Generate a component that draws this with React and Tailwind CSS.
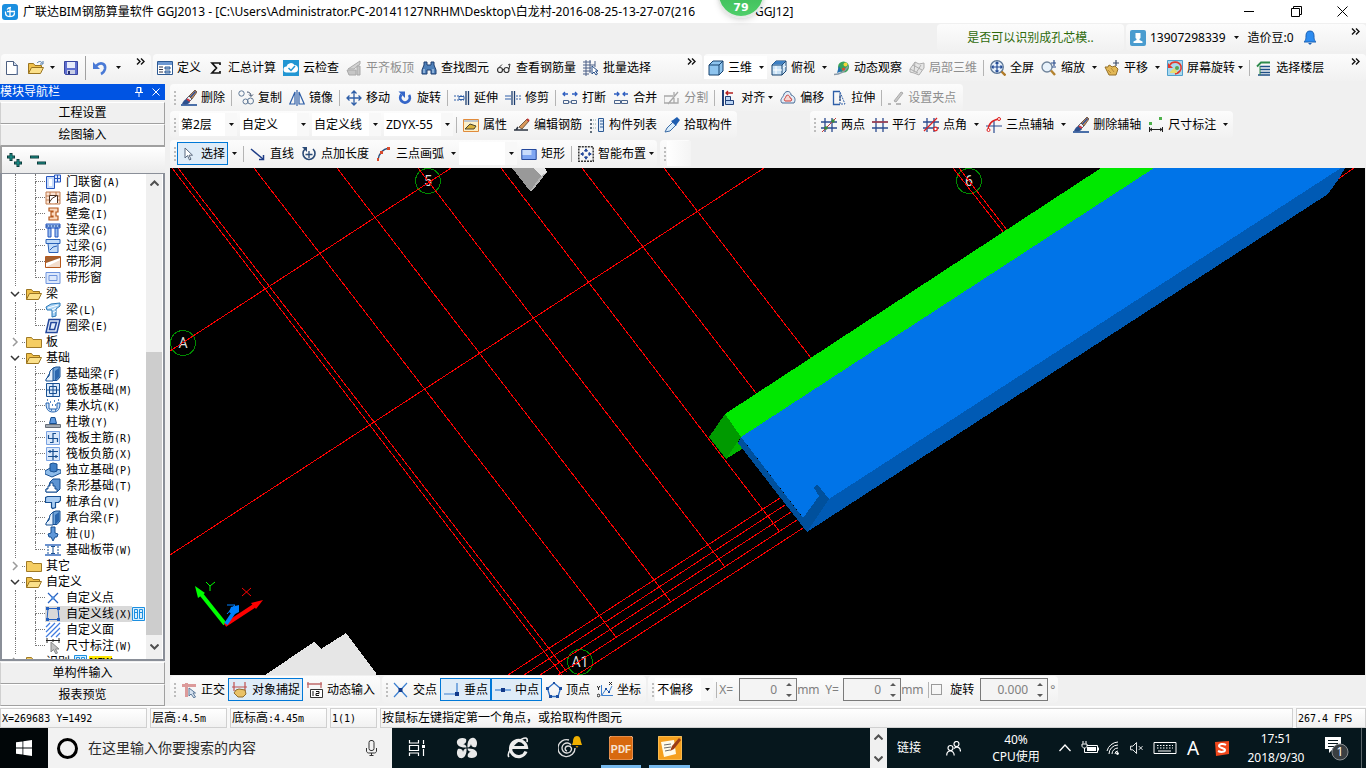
import React from 'react';

const Svg = ({ children }) => (
    <svg className="size-4 shrink-0" viewBox="0 0 16 16" fill="none" aria-hidden="true">
        {children}
    </svg>
);

const brush = (
    <>
        <path d="M0 15h16" stroke="#4a6fa8" strokeWidth="2" />
        <path d="M1 14c1-3 3-5 5-5l3 3c-1 2-4 3-8 2z" fill="#2d4f8e" />
        <path d="M5 9l3-3 3 3-3 3z" fill="#e9edf5" stroke="#345" strokeWidth=".8" />
        <path d="M6 9l3 2" stroke="#d03040" strokeWidth="1.6" />
        <path d="M8 6l6-6 2 2-5 7z" fill="#c98f5e" stroke="#5c4331" strokeWidth=".8" />
        <path d="M9.500 7l5-5.500" stroke="#27509b" strokeWidth="1.400" />
    </>
);

const folderOpen = (
    <>
        <path d="M.5 13.500V3.500h5l1.500 2h6.500v3" fill="#f0c04a" stroke="#9a7420" />
        <path d="M.5 13.500l3-6h12l-3 6z" fill="#fbe08a" stroke="#9a7420" />
    </>
);

const axisHash = <path d="M4 1v14M11 1v14M0 5h16M0 11h16" stroke="#2b4b8f" strokeWidth="1.300" />;

const cubeTop = (fill) => (
    <>
        <path d="M1 5l4-4h10v10l-4 4H1z" fill={fill} stroke="#17426f" />
        <path d="M1 5h10v10M11 5l4-4" stroke="#17426f" />
    </>
);

const footing = (
    <>
        <path d="M1 14.500L3 10l5-8 3-1h4v10l-3 3.500z" fill="#6fa3d8" stroke="#174f91" />
        <path d="M1 15v-2l3-3 1-5 3-3v13z" fill="#e6f1fc" stroke="#174f91" />
        <path d="M10 14V5l4-3v9l-3 3z" fill="#2a66ad" />
    </>
);

const icons = {
    newFile: (
        <>
            <path d="M2.500 1.500h7l4 4v9h-11z" fill="#fff" stroke="#4c5f80" />
            <path d="M9.500 1.500v4h4" fill="#cfdcef" stroke="#4c5f80" />
            <path d="M12 14h1V6" stroke="#8aa0c4" />
        </>
    ),
    open: (
        <>
            {folderOpen}
            <path d="M9 3c2-2 4-2 5 0m1-2v3h-3" stroke="#4a77a8" />
        </>
    ),
    save: (
        <>
            <path d="M1.500 1.500h13v13h-12l-1-1z" fill="#5f6fd0" stroke="#3a469f" />
            <path d="M4 2h8v6H4z" fill="#e8ecfb" />
            <path d="M4 10h8v4H4z" fill="#c9cfe6" />
            <path d="M5 11h2v3H5z" fill="#27306e" />
        </>
    ),
    undo: (
        <>
            <path d="M4 6c5-5 10-2 9 3-.5 2-2 4-4 5" stroke="#4a7ad6" strokeWidth="2.600" />
            <path d="M1 2v7h7z" fill="#4a7ad6" />
        </>
    ),
    define: (
        <>
            <path d="M.5 1.500h15v13H.5z" fill="#fff" stroke="#2d5a94" />
            <path d="M1 2h14v3H1z" fill="#6d98d2" />
            <path d="M2 7h4M2 9.500h4M2 12h4" stroke="#334" />
            <path d="M8 7h5v2H8zM8 11h5v2H8z" fill="#a9c4e6" stroke="#2d5a94" />
        </>
    ),
    sigma: <path d="M12 5V3H4l4.500 5L4 13h8v-2" stroke="#111" strokeWidth="1.700" />,
    cloud: (
        <>
            <path d="M0 0h16v16H0z" fill="#2196d3" />
            <path d="M3.500 12.500a3 3 0 010-6 4.500 4.500 0 018-1.500 3.800 3.800 0 01.5 7.500z" fill="#fff" />
            <path d="M5.500 8l2.500 2.500 4-4.500" stroke="#2196d3" strokeWidth="1.500" />
        </>
    ),
    alignSlab: (
        <>
            <path d="M2 9l6-4 6-4v3L8 9z" fill="#d2d2d2" stroke="#aaa" />
            <path d="M1 10h9v5H3zM11 6h3v9h-3z" fill="#c6c6c6" stroke="#a8a8a8" />
        </>
    ),
    binoculars: (
        <>
            <path d="M3 2h3v3h4V2h3v3l2 5v4h-5v-4H6v4H1v-4l2-5z" fill="#4d7fb8" stroke="#1e3f70" />
            <path d="M3 9v4M12 9v4" stroke="#cfe2f7" />
        </>
    ),
    glasses: (
        <>
            <circle cx="4" cy="10" r="2.500" stroke="#333" strokeWidth="1.200" />
            <circle cx="10.500" cy="10" r="2.500" stroke="#333" strokeWidth="1.200" />
            <path d="M6.500 9.500h1.500M3 7.500l3-3M13 9l1-5-2 1" stroke="#333" />
        </>
    ),
    batch: (
        <>
            <path d="M0 2h8M0 5h12M0 8h8M0 11h8M0 14h6M3 0v16M7 0v13M12 1v6" stroke="#4a5f86" />
            <path d="M9 6v8l2-2 2 3 1.500-1-2-3h2.500z" fill="#fff" stroke="#234b86" />
        </>
    ),
    cube: cubeTop('#8ec4ee'),
    cubeTopView: (
        <>
            {cubeTop('#c9e2f6')}
            <path d="M1.500 4.500L5 1h9.500L11 4.500z" fill="#3d7fc2" />
            <path d="M5 6v8M2 10h9M12 8l3-2" stroke="#fff" />
        </>
    ),
    orbit: (
        <>
            <ellipse cx="9.500" cy="7" rx="5.500" ry="5.500" fill="#3aa45a" />
            <circle cx="11.500" cy="4.500" r="2" fill="#f0d83a" />
            <path d="M0 14.500c4 0 10-2 14-8" stroke="#8a9aa8" strokeWidth="1.500" />
            <path d="M3 13l2-7 3 5z" fill="#1f6fb0" />
            <circle cx="9.500" cy="9" r="1.500" fill="#e14a2c" />
        </>
    ),
    partial3d: (
        <path
            d="M1 9l5-7 4 2 5-1v5l-5 7-5-2-4-1zM4 5l9 5M7 13l5-8M1 9l8 4M6 2l-1 10"
            fill="#e5e5e5"
            stroke="#adadad"
        />
    ),
    fullscreen: (
        <>
            <circle cx="7" cy="7" r="6.300" fill="#e6f0fb" stroke="#5b7595" strokeWidth="1.300" />
            <path d="M7 2v10M2 7h10M5.500 3.500L7 2l1.500 1.500M5.500 10.500L7 12l1.500-1.500M3.500 5.500L2 7l1.500 1.500M10.500 5.500L12 7l-1.500 1.500" stroke="#234b96" strokeWidth="1.200" />
            <path d="M11.500 11.500l4 4" stroke="#b07a28" strokeWidth="2.400" />
        </>
    ),
    zoom: (
        <>
            <circle cx="6" cy="7" r="5" fill="#e8f2fb" stroke="#70849b" strokeWidth="1.300" />
            <path d="M10 10.500l4 4.500" stroke="#b3822e" strokeWidth="2.400" />
            <path d="M13 0v6M10 3h5M11 7h4" stroke="#2d4f8e" strokeWidth="1.200" />
        </>
    ),
    pan: (
        <>
            <path d="M1 7h3l1-2 2 1 1 1 3-1 3 3-2 6H5z" fill="#e3b856" stroke="#94702a" />
            <path d="M4 10l3 3M7 8l3 4" stroke="#b98c36" />
            <path d="M12 0v6M9 3h6" stroke="#3a4a66" strokeWidth="1.200" />
        </>
    ),
    screenRotate: (
        <>
            <path d="M.5.5h15v15H.5z" fill="#aad9ee" stroke="#4fa0cd" />
            <path d="M3 5c2-4 9-4 11 1 1 4-2 7-6 8" stroke="#e03a2e" strokeWidth="1.600" />
            <path d="M1 3v5h5z" fill="#e03a2e" />
            <path d="M3 12l4-4 3 3v2H3z" fill="#e7dd71" />
            <circle cx="10" cy="8" r="2" fill="#58a452" />
        </>
    ),
    floors: (
        <>
            <path d="M1 6.500L5 2.500h9" stroke="#2d8a4b" strokeWidth="1.800" />
            <path d="M4 6.500h10M4 9.500h10M4 12.500h10M2 15h12" stroke="#1e4f86" strokeWidth="1.500" />
            <path d="M4 6v9" stroke="#2d8a4b" />
        </>
    ),
    brush,
    copy: (
        <>
            <circle cx="3.500" cy="3.500" r="2.700" stroke="#5f7896" />
            <circle cx="7.500" cy="11.500" r="2.500" stroke="#5f7896" />
            <circle cx="12.500" cy="11" r="3" stroke="#5f7896" />
            <path d="M9 2c2 0 4 1 4 4M11 4.500l2 2 2-2" stroke="#3a4b66" />
        </>
    ),
    mirror: <path d="M6 2v12H.8zM10 2v12h5.200zM8 0v16" stroke="#2f5fa8" strokeWidth="1.200" />,
    move: (
        <path d="M8 1v14M1 8h14M5.500 3.500L8 1l2.500 2.500M5.500 12.500L8 15l2.500-2.500M3.500 5.500L1 8l2.500 2.500M12.500 5.500L15 8l-2.500 2.500" stroke="#2f5fa8" strokeWidth="1.300" />
    ),
    rotate: (
        <>
            <path d="M4.500 4.500a4.800 4.800 0 107.500.5" stroke="#3566c8" strokeWidth="2.800" />
            <path d="M1.500 1.500H8V8z" fill="#3566c8" />
        </>
    ),
    extend: (
        <>
            <path d="M0 6h10M0 10h10" stroke="#2f5fa8" strokeDasharray="2 1" />
            <path d="M5 6.500h5v3H5z" stroke="#2f5fa8" />
            <path d="M12 1v14M14.500 1v14" stroke="#1e3f70" strokeWidth="1.300" />
        </>
    ),
    trim: (
        <>
            <path d="M7 1v14M9.500 1v14" stroke="#1e3f70" strokeWidth="1.300" />
            <path d="M0 6h6M0 9h6" stroke="#2f5fa8" />
            <path d="M11 6h5M11 9h5" stroke="#2f5fa8" strokeDasharray="2 1" />
        </>
    ),
    breakIt: (
        <>
            <path d="M1 4h5M10 4h5M3 2L1 4l2 2M13 2l2 2-2 2" stroke="#2f5fc0" strokeWidth="1.300" />
            <path d="M1.500 10.500h5v3h-5zM9.500 10.500h5v3h-5zM6 12h4" stroke="#4a648c" />
        </>
    ),
    join: (
        <>
            <path d="M1 4h5M10 4h5M4 2l2 2-2 2M12 2l-2 2 2 2" stroke="#2f5fc0" strokeWidth="1.300" />
            <path d="M1.500 10.500h6v3h-6zM8.500 10.500h6v3h-6z" stroke="#4a648c" />
        </>
    ),
    split: <path d="M0 6h9M0 13h14V8M0 6v7M4 14l10-12M10 2v11" stroke="#a9a9a9" strokeWidth="1.300" />,
    align: (
        <>
            <path d="M2 0v16" stroke="#1f3f78" strokeWidth="2" />
            <path d="M4.500 10.500h8v4h-8zM4.500 6.500h5v4h-5z" fill="#b9d3f3" stroke="#1f3f78" />
            <path d="M12 3H5M7 1L5 3l2 2" stroke="#b32020" strokeWidth="1.300" />
        </>
    ),
    offset: (
        <>
            <path d="M2 13c-3-4 1-5 2-9 2-4 7-3 7 1 4 1 5 5 3 8z" fill="#e3ecf7" stroke="#4a6c96" />
            <path d="M5 11c-2-2 1-3 1-5 2-2 4 0 4 2 2 0 2 2 1 3z" fill="#f6d6d2" stroke="#cf3b34" />
        </>
    ),
    stretch: (
        <>
            <path d="M9 1.500H2.500v13H9" stroke="#2f5fa8" strokeWidth="1.300" />
            <path d="M9 2l5 12H9z" stroke="#2f5fa8" strokeDasharray="2 1" />
            <path d="M9 5v6" stroke="#1e3f70" />
        </>
    ),
    gripPoint: (
        <>
            <path d="M6 11L13 2l2 1-7 9z" fill="#c9c9c9" stroke="#aaa" />
            <path d="M0 14h3M8 14h5" stroke="#a5a5a5" strokeWidth="1.500" />
        </>
    ),
    property: (
        <>
            <path d="M.5 2.500h15v12H.5z" fill="#fdf0c8" stroke="#e08b3c" />
            <path d="M1 3h14v2H1z" fill="#bfc6cf" />
            <path d="M2 12l5-5 6 2-2 3H6z" fill="#d9b13a" stroke="#4a4330" />
        </>
    ),
    editBar: (
        <>
            <path d="M0 13h14M2 13l2-3" stroke="#2b3340" strokeWidth="1.500" />
            <path d="M5 10L13 2l2 2-7 8z" fill="#d9985a" stroke="#58402b" strokeWidth=".8" />
            <path d="M13 2l2 2" stroke="#c03434" strokeWidth="2" />
        </>
    ),
    memberList: (
        <>
            <path d="M1 3h2M1 7h2M1 11h2M1 15h2" stroke="#345" strokeWidth="1.500" />
            <path d="M4 3h4M4 7h4M4 11h4" stroke="#8aa" strokeDasharray="1 1" />
            <path d="M9.500 1.500h5v13h-5z" fill="#e2edf9" stroke="#2d5a94" />
            <path d="M11 4h3M11 7h3M11 10h3" stroke="#2d5a94" />
        </>
    ),
    picker: (
        <>
            <path d="M1 15l2-4 6-6 3 3-6 6z" fill="#d9ecfb" stroke="#3a6ba5" />
            <path d="M7 4l2-1 4-3 3 3-3 4-1 2z" fill="#1e5db0" />
        </>
    ),
    twoPoint: (
        <>
            {axisHash}
            <path d="M1 15L15 1" stroke="#c23b3b" />
            <circle cx="5" cy="11" r="1.700" fill="#3a8a35" />
            <circle cx="12" cy="4" r="1.700" fill="#3a8a35" />
        </>
    ),
    parallel: (
        <>
            {axisHash}
            <path d="M0 5h16" stroke="#c23b3b" strokeWidth="1.300" />
        </>
    ),
    pointAngle: (
        <>
            {axisHash}
            <path d="M1 14L14 1" stroke="#d22" strokeWidth="1.300" />
            <circle cx="12.500" cy="12" r="1.800" fill="#fff" stroke="#d22" strokeWidth="1.300" />
        </>
    ),
    threeAxis: (
        <>
            <path d="M8 3v13M0 9h16" stroke="#2b4b8f" strokeWidth="1.200" />
            <path d="M2 14C2 7 6 3 13 2" stroke="#d22" strokeWidth="1.300" />
            <circle cx="13" cy="2" r="1.500" fill="#fff" stroke="#d22" />
            <circle cx="2.500" cy="13" r="1.500" fill="#fff" stroke="#d22" />
        </>
    ),
    dimension: (
        <>
            <path d="M1 5h3v3H1zM11 0h3v3h-3z" fill="#4db04a" />
            <path d="M1.500 10v5M14.500 10v5M2 12.500h12M4 11l-2 1.500L4 14M12 11l2 1.500-2 1.500" stroke="#222" />
        </>
    ),
    cursor: <path d="M4 2v10l2.500-2.500L8.500 14l1.500-.8-2-4h3.500z" fill="#fff" stroke="#5a6a80" />,
    line: (
        <>
            <path d="M1 3l12 10" stroke="#1d3c86" strokeWidth="1.500" />
            <path d="M13.500 9v4.500H9" stroke="#1d3c86" strokeWidth="1.500" />
        </>
    ),
    pointLength: (
        <>
            <path d="M4 3a6 6 0 108 0" stroke="#2b4b77" strokeWidth="1.600" />
            <path d="M8 5v7M4.500 8.500h7" stroke="#2b4b77" strokeWidth="1.300" />
            <path d="M1 1h5v5z" fill="#2b4b77" />
        </>
    ),
    arc: (
        <>
            <path d="M2 14C3 7 7 3 13 2" stroke="#2b4b77" strokeWidth="1.400" />
            <path d="M1 12h2v3H1zM4 5h3v3H4zM11 1h3v3h-3z" fill="#d84a2c" />
        </>
    ),
    rect: (
        <>
            <path d="M.8 3.500h14.400v10H.8z" fill="#7fa6f2" stroke="#24489c" />
            <path d="M1.500 4h9v5h-9z" fill="#c9dcfb" />
        </>
    ),
    smart: (
        <>
            <path d="M.8.8h14.400v14.400H.8z" stroke="#333" strokeWidth="1.500" strokeDasharray="2 1" />
            <path d="M8 2.500v3.500M8 10v3.500M2.500 8H6M10 8h3.500M8 3L6.500 5h3zM8 13l-1.500-2h3zM3 8l2-1.500v3zM13 8l-2-1.500v3z" stroke="#24489c" fill="#24489c" />
        </>
    ),
    ortho: (
        <>
            <path d="M1 3.500h14M5.500 1v14" stroke="#dc9a9a" strokeWidth="3" />
            <path d="M8 6v8l2-2 3 4 1.500-1-2.500-4h2.500z" fill="#d7e2ef" stroke="#5b7899" />
        </>
    ),
    snap: (
        <>
            <path d="M2 0v9M13 0v9M0 5h15" stroke="#c05050" strokeWidth="1.200" />
            <path d="M4 8l3-1 6 1 1 4-3 3H6l-4-4z" fill="#e9c268" stroke="#8f6c2d" />
        </>
    ),
    dynInput: (
        <>
            <path d="M0 2h15M1 0v6M14 0v6" stroke="#c06b6b" strokeWidth="1.300" />
            <path d="M3.500 7.500h12v8h-12z" fill="#fff" stroke="#333" />
            <path d="M6 9v5M9 9.500h3v2H9v2h3" stroke="#111" />
        </>
    ),
    cross: (
        <>
            <path d="M1 1l13 14M14 1L1 15" stroke="#3b7fd0" strokeWidth="1.200" />
            <path d="M5.500 6h4v4h-4z" fill="#123a8a" />
        </>
    ),
    perp: (
        <>
            <path d="M13 1v12M0 12h15" stroke="#3b7fd0" strokeWidth="1.200" />
            <path d="M11 10h4v4h-4z" fill="#123a8a" />
        </>
    ),
    mid: (
        <>
            <path d="M0 8h16" stroke="#3b7fd0" strokeWidth="1.200" />
            <path d="M6 6h4v4H6z" fill="#123a8a" />
        </>
    ),
    vertex: (
        <>
            <path d="M8 1l6.500 5.500L12 14.500H4L1.500 6.500z" stroke="#2f6fc4" strokeWidth="1.300" />
            <path d="M7 0h2v2H7zM0 5h3v3H0zM13 5h3v3h-3zM3 13h3v3H3zM10 13h3v3h-3z" fill="#1d4fa0" />
        </>
    ),
    coord: (
        <>
            <path d="M4.500 3v10.500H16M5 13l4-6 3 3 3-6" stroke="#3b7fd0" />
            <path d="M0 4l1.500 2L3 4M1.500 6v2M12 0l3 3M15 0l-3 3" stroke="#222" />
            <circle cx="1.500" cy="13.500" r="1.300" stroke="#222" />
            <path d="M8 6h2v2H8zM11 9h2v2h-2z" fill="#1d4fa0" />
        </>
    ),
    // tree icons
    folder: <path d="M.5 13.500v-10h5l1.500 2h8.500v8z" fill="#f5cd62" stroke="#a07a26" />,
    folderOpen,
    doorWindow: (
        <>
            <path d="M1.500 2.500h8v12h-8z" fill="#c9dcfb" stroke="#2656c0" />
            <path d="M9.500 1h6v7h-6zM12.500 1v7M10 4.500h5" fill="#dfeafc" stroke="#2656c0" />
            <path d="M4 5h3v7H4z" fill="#fff" />
        </>
    ),
    wallHole: (
        <>
            <path d="M1 2h14v12H1zM1 6h14M1 10h14M5 2v12M11 2v12" fill="#fbe3d3" stroke="#c27c4e" />
            <path d="M4.500 13V5.500h8V13" fill="#fff" stroke="#4a3223" />
            <path d="M4.500 12l3-4 4-2" stroke="#4a3223" />
        </>
    ),
    niche: <path d="M4 2h9v4h-2v4h2v4H4v-3h4v-1H6V6h2V5H4z" fill="#fbd9bf" stroke="#b4571c" strokeWidth="1.200" />,
    linkBeam: (
        <>
            <path d="M1 2h14v4H1zM3 6h3v9H3zM10 6h3v9h-3z" fill="#9cc0f0" stroke="#2656c0" />
            <path d="M1 4h14" stroke="#1a3f8a" strokeDasharray="2 1" />
        </>
    ),
    lintel: <path d="M1 1.500h14v4H1zM3 5.500h10v9H4zM5 12l3-3 4-1" fill="#c3dcf8" stroke="#2a62b8" />,
    stripHole: (
        <>
            <path d="M.5 2.500h15v11H.5z" fill="#fff" stroke="#b4571c" />
            <path d="M1 9l14-5V3H1z" fill="#a4602f" />
            <path d="M1 13l14-7v7z" fill="#f3dccb" />
        </>
    ),
    stripWindow: <path d="M1 2.500h14v11H1zM4 5.500h8v5H4z" fill="#dce8fc" stroke="#6d93dc" />,
    beam: (
        <>
            <path d="M1 5l5-3 9-1v3l-4 3v7l-4 1V8L2 8z" fill="#a9d3f4" stroke="#2a78b8" />
            <path d="M7 8l4-2M3 6l10-3M8 11l3-2" stroke="#fff" />
        </>
    ),
    ringBeam: <path d="M4 1.500h11L12 14.500H1zM6 4.500h5.500L9.500 11.500H4.500z" fill="#e1ebfa" stroke="#24489c" strokeWidth="1.500" />,
    footing,
    raft: (
        <path d="M1.500 1.500h13v13h-13zM4.500 4.500h7v7h-7zM1 8h14M8 1v14" fill="#dcebfb" stroke="#174f91" />
    ),
    pit: (
        <>
            <path d="M1 5h3v6h8V5h3c0 6-2 9-7 9s-7-3-7-9z" fill="#d5e8fb" stroke="#2060b0" />
            <path d="M5 4h1M9 3h1M7 7h1M10 7h1M2 2h1M13 2h1M6 12h1M10 12h1" stroke="#2060b0" strokeWidth="1.300" />
        </>
    ),
    pedestal: (
        <>
            <path d="M4.500 9.500l1.500-6h4l1.500 6z" fill="#5f9ae0" stroke="#174f91" />
            <path d="M.5 10.500h15v3H.5z" fill="#a5abb3" stroke="#666d77" />
        </>
    ),
    raftMain: (
        <>
            <path d="M1.500 1.500h13v13h-13z" fill="#dbe9fb" stroke="#7aa3e2" />
            <path d="M8 3.500h3M8 3v10M3.500 5v3.500h9V12M8 12.500H5" stroke="#174f91" strokeWidth="1.200" />
        </>
    ),
    raftNeg: (
        <>
            <path d="M1.500 1.500h13v13h-13z" fill="#dbe9fb" stroke="#7aa3e2" />
            <path d="M3 5.500h10M3 10.500h10M8 3v11M5 4v3M11 9v3" stroke="#174f91" strokeWidth="1.200" />
        </>
    ),
    isolated: (
        <>
            <path d="M0 9l5-3 11 2v3l-9 4-7-3z" fill="#8dbbe9" stroke="#174f91" />
            <path d="M5 2l3-1 4 1v7l-3 1-4-1z" fill="#3f7fc7" stroke="#174f91" />
        </>
    ),
    strip: (
        <>
            <path d="M1 14v-3h2l2-7 3-3h7v10l-3 3z" fill="#5d94d2" stroke="#174f91" />
            <path d="M1 14v-3h2V8h2V5h3v3h2v3h2v3z" fill="#fff" stroke="#174f91" />
        </>
    ),
    pileCap: <path d="M.5 3.500l2-1h13v4l-2 2h-3v5l-3 1-1-1V8.500h-6z" fill="#a9cdf3" stroke="#174f91" strokeWidth="1.200" />,
    pile: <path d="M6 1h4v6l3 1-1 3h-2l-2 4-2-4H4L3 8l3-1z" fill="#5f97d8" stroke="#174f91" />,
    slabStrip: (
        <>
            <path d="M0 3h16M0 13h16" stroke="#3b6fc0" strokeWidth="1.500" />
            <path d="M3 4v8M13 4v8" stroke="#174f91" strokeDasharray="2 1" />
            <path d="M8 4v8M6 4.500h4M6 11.500h4" stroke="#174f91" />
        </>
    ),
    customPoint: (
        <>
            <path d="M3 3l10 10M13 3L3 13" stroke="#2460c0" strokeWidth="1.200" />
            <path d="M6.500 6.500h3v3h-3z" fill="#4b8be0" />
        </>
    ),
    customLine: (
        <>
            <path d="M3 2.500h10l1 11H2z" stroke="#2460c0" />
            <path d="M1 1h3v3H1zM12 1h3v3h-3zM1 12h3v3H1zM12 12h3v3h-3z" fill="#2460c0" />
        </>
    ),
    customFace: (
        <path d="M1 5l4-4M1 10l9-9M1 15L15 1M6 15l9-9M11 15l4-4" stroke="#3f7be0" strokeWidth="1.200" />
    ),
    dimTree: (
        <>
            <path d="M1 2.500h14M2 0v5M8 1v3M14 0v5" stroke="#222" />
            <path d="M6 4v10l2.500-2.500L11 16l1.500-1-2-4H14z" fill="#c3c3c3" stroke="#888" />
        </>
    ),
};

const Icon = ({ name }) => <Svg>{icons[name]}</Svg>;

const Caret = () => (
    <svg className="h-[3px] w-[5px] shrink-0" viewBox="0 0 5 3" aria-hidden="true">
        <path d="M0 0h5L2.500 3z" fill="#111" />
    </svg>
);

const Grip = () => (
    <span className="flex w-[7px] shrink-0 flex-col gap-[2px] pl-1">
        <i className="h-[2px] w-[2px] bg-[#bdbdbd]" />
        <i className="h-[2px] w-[2px] bg-[#bdbdbd]" />
        <i className="h-[2px] w-[2px] bg-[#bdbdbd]" />
        <i className="h-[2px] w-[2px] bg-[#bdbdbd]" />
    </span>
);

const Sep = () => (
    <span className="flex w-[6px] shrink-0 justify-center">
        <i className="h-4 w-px bg-[#b4b4b4]" />
    </span>
);

const Group = ({ children, className = '' }) => (
    <div
        className={`flex h-[27px] shrink-0 items-center rounded-sm bg-gradient-to-b from-[#fcfcfc] to-[#f1f1f1] ${className}`}
    >
        {children}
    </div>
);

const Tool = ({ icon, label, arrow, active, disabled }) => (
    <>
        <button
            disabled={disabled}
            className={`flex h-[23px] shrink-0 items-center gap-1 whitespace-nowrap pl-1 pr-[3px] ${
                active ? 'bg-[#dfecf8] ring-1 ring-inset ring-[#0078d7]' : ''
            } ${disabled ? 'text-[#8e8e8e]' : 'text-black'}`}
        >
            <Icon name={icon} />
            {label}
        </button>
        {arrow === 'split' && (
            <span className="flex w-3 shrink-0 justify-center">
                <Caret />
            </span>
        )}
        {arrow === 'menu' && (
            <span className="flex w-2 shrink-0">
                <Caret />
            </span>
        )}
    </>
);

const Combo = ({ label, value, className }) => (
    <span className={`flex h-[23px] shrink-0 items-center bg-white ${className}`}>
        <select
            aria-label={label}
            defaultValue={value}
            className="h-full min-w-0 flex-1 appearance-none bg-white pl-[2px] outline-none"
        >
            <option>{value}</option>
        </select>
        <span className="flex h-full w-3 items-center justify-center bg-[#f8f8f8]">
            <Caret />
        </span>
    </span>
);

const More = () => (
    <button aria-label="更多" className="mr-1 ml-auto flex h-full w-[11px] shrink-0 items-start pt-1">
        <svg className="h-[7px] w-[9px]" viewBox="0 0 9 7" fill="none">
            <path d="M1 .5l3 3-3 3M5 .5l3 3-3 3" stroke="#111" strokeWidth="1.400" />
        </svg>
    </button>
);

// Latin runs are set in a 6px wide monospace next to the 12px Chinese glyphs
const Song = ({ text }) =>
    text.split(/([\x20-\x7e]+)/).map((part, i) =>
        /^[\x20-\x7e]+$/.test(part) ? (
            <span key={i} className="whitespace-pre font-['DejaVu_Sans_Mono','Noto_Sans_CJK_SC',monospace] text-[10px]">
                {part}
            </span>
        ) : (
            part
        )
    );

const TitleBar = () => (
    <header className="relative flex h-[23px] shrink-0 items-center bg-white pl-[2px]">
        <svg className="size-4 shrink-0" viewBox="0 0 16 16" fill="none">
            <rect width="16" height="16" rx="3" fill="#1b8fe0" />
            <path d="M8 3v10M3.500 7.500v1c0 3 2 4 4 4M12.500 8.500c0 3-2 4-4 4M5 7.500h8M5 5.500C6 4 7 3.500 9 3.500" stroke="#fff" strokeWidth="1.300" />
        </svg>
        <h1 className="ml-[5px] flex flex-1 whitespace-nowrap">
            <span className="w-[732px]">
                广联达BIM钢筋算量软件 GGJ2013 - [C:\Users\Administrator.PC-20141127NRHM\Desktop\白龙村-2016-08-25-13-27-07(216
            </span>
            <span>GGJ12]</span>
        </h1>
        <div className="absolute top-[-30px] left-[717px] flex size-12 items-end justify-center rounded-full border-2 border-[#e4e8e4] bg-gradient-to-b from-[#2fae4c] to-[#4fcf6a] pb-px font-['DejaVu_Sans',sans-serif] text-[11px] leading-[14px] font-bold text-white shadow-md">
            79
        </div>
        <div className="flex w-[140px] items-center">
            <button aria-label="最小化" className="flex flex-1 justify-center">
                <i className="h-px w-[10px] bg-black" />
            </button>
            <button aria-label="还原" className="flex flex-1 justify-center">
                <svg className="size-[11px]" viewBox="0 0 11 11" fill="none">
                    <path d="M.5 2.500h8v8h-8zM2.500 2.500v-2h8v8h-2" stroke="#000" />
                </svg>
            </button>
            <button aria-label="关闭" className="flex flex-1 justify-center">
                <svg className="size-[11px]" viewBox="0 0 11 11" fill="none">
                    <path d="M.5.5l10 10M10.500.5l-10 10" stroke="#000" />
                </svg>
            </button>
        </div>
    </header>
);

const AccountBar = () => (
    <div className="flex h-[30px] shrink-0 justify-end gap-[2px] pt-px">
        <Group className="w-[187px] justify-center text-[#2f6b0c]">
            <a href="#tip">是否可以识别成孔芯模..</a>
        </Group>
        <Group className="w-[240px] pl-1">
            <svg className="size-4 shrink-0" viewBox="0 0 16 16">
                <rect width="16" height="16" rx="2" fill="#4a9ccf" />
                <path d="M5.500 3h5v5l-1 1v1l3 1.500V13h-9v-1.500l3-1.500V9l-1-1z" fill="#fff" />
            </svg>
            <button className="flex items-center gap-2 pl-1">
                13907298339
                <Caret />
            </button>
            <span className="pl-[9px]">造价豆:0</span>
            <button aria-label="消息" className="pl-2">
                <svg className="size-4" viewBox="0 0 16 16">
                    <path d="M8 1c3 0 4 2 4 5 0 4 1 5 2 6H2c1-1 2-2 2-6 0-3 1-5 4-5z" fill="#2d8cf0" stroke="#1d62b5" />
                    <path d="M6 13h4l-2 2z" fill="#1d62b5" />
                </svg>
            </button>
            <More />
        </Group>
    </div>
);

const MainToolbar = () => (
    <div className="flex h-[31px] shrink-0 gap-[2px] pt-px pl-px">
        <Group className="w-[150px] pl-[3px]">
            <button aria-label="新建" className="w-6"><Icon name="newFile" /></button>
            <button aria-label="打开" className="w-[22px]"><Icon name="open" /></button>
            <Caret />
            <button aria-label="保存" className="ml-2 w-[18px]"><Icon name="save" /></button>
            <i className="ml-1 h-6 w-px bg-[#a0a0a0]" />
            <button aria-label="撤销" className="ml-[6px] w-6"><Icon name="undo" /></button>
            <Caret />
            <More />
        </Group>
        <Group className="w-[549px]">
            <Tool icon="define" label="定义" />
            <Tool icon="sigma" label="汇总计算" />
            <Tool icon="cloud" label="云检查" />
            <Tool icon="alignSlab" label="平齐板顶" disabled />
            <Tool icon="binoculars" label="查找图元" />
            <Tool icon="glasses" label="查看钢筋量" />
            <Tool icon="batch" label="批量选择" />
            <More />
        </Group>
        <Group className="min-w-0 flex-1">
            <span className="flex items-center bg-white">
                <Tool icon="cube" label="三维" arrow="split" />
            </span>
            <Tool icon="cubeTopView" label="俯视" arrow="split" />
            <Tool icon="orbit" label="动态观察" />
            <Tool icon="partial3d" label="局部三维" disabled />
            <Sep />
            <Tool icon="fullscreen" label="全屏" />
            <Tool icon="zoom" label="缩放" arrow="split" />
            <Tool icon="pan" label="平移" arrow="split" />
            <Tool icon="screenRotate" label="屏幕旋转" arrow="menu" />
            <Sep />
            <Tool icon="floors" label="选择楼层" />
            <More />
        </Group>
    </div>
);

const EditToolbars = () => (
    <>
        <div className="flex h-[27px] shrink-0">
            <Group className="pr-1">
                <Grip />
                <Tool icon="brush" label="删除" />
                <Sep />
                <Tool icon="copy" label="复制" />
                <Tool icon="mirror" label="镜像" />
                <Sep />
                <Tool icon="move" label="移动" />
                <Tool icon="rotate" label="旋转" />
                <Sep />
                <Tool icon="extend" label="延伸" />
                <Tool icon="trim" label="修剪" />
                <Sep />
                <Tool icon="breakIt" label="打断" />
                <Tool icon="join" label="合并" />
                <Tool icon="split" label="分割" disabled />
                <Sep />
                <Tool icon="align" label="对齐" arrow="menu" />
                <Tool icon="offset" label="偏移" />
                <Tool icon="stretch" label="拉伸" />
                <Sep />
                <Tool icon="gripPoint" label="设置夹点" disabled />
            </Group>
        </div>
        <div className="flex h-[29px] shrink-0 gap-[73px]">
            <Group className="pr-[2px]">
                <Grip />
                <div className="flex gap-[3px] pl-[2px]">
                    <Combo label="楼层" value="第2层" className="w-[58px]" />
                    <Combo label="构件类型" value="自定义" className="w-[69px]" />
                    <Combo label="构件" value="自定义线" className="w-[69px]" />
                    <Combo label="构件名称" value="ZDYX-55" className="w-[69px]" />
                </div>
                <Sep />
                <Tool icon="property" label="属性" />
                <Tool icon="editBar" label="编辑钢筋" />
                <Tool icon="memberList" label="构件列表" />
                <Tool icon="picker" label="拾取构件" />
            </Group>
            <Group className="pr-[2px]">
                <Grip />
                <Tool icon="twoPoint" label="两点" />
                <Tool icon="parallel" label="平行" />
                <Tool icon="pointAngle" label="点角" arrow="split" />
                <Tool icon="threeAxis" label="三点辅轴" arrow="split" />
                <Tool icon="brush" label="删除辅轴" />
                <Tool icon="dimension" label="尺寸标注" arrow="split" />
            </Group>
        </div>
        <div className="flex h-[28px] shrink-0 gap-[3px]">
            <Group>
                <Grip />
                <Tool icon="cursor" label="选择" arrow="split" active />
                <Sep />
                <Tool icon="line" label="直线" />
                <Tool icon="pointLength" label="点加长度" />
                <Tool icon="arc" label="三点画弧" arrow="split" />
                <Combo label="画弧方式" value="" className="w-[58px]" />
                <Tool icon="rect" label="矩形" />
                <Sep />
                <Tool icon="smart" label="智能布置" arrow="menu" />
            </Group>
            <Group>
                <Grip />
                <span className="h-[25px] w-6 bg-gradient-to-r from-white to-[#f4f4f4]" />
            </Group>
        </div>
    </>
);

const tree = [
    { icon: 'doorWindow', label: '门联窗(A)' },
    { icon: 'wallHole', label: '墙洞(D)' },
    { icon: 'niche', label: '壁龛(I)' },
    { icon: 'linkBeam', label: '连梁(G)' },
    { icon: 'lintel', label: '过梁(G)' },
    { icon: 'stripHole', label: '带形洞' },
    { icon: 'stripWindow', label: '带形窗', last: true },
    { folder: true, open: true, label: '梁' },
    { icon: 'beam', label: '梁(L)' },
    { icon: 'ringBeam', label: '圈梁(E)', last: true },
    { folder: true, label: '板' },
    { folder: true, open: true, label: '基础' },
    { icon: 'footing', label: '基础梁(F)' },
    { icon: 'raft', label: '筏板基础(M)' },
    { icon: 'pit', label: '集水坑(K)' },
    { icon: 'pedestal', label: '柱墩(Y)' },
    { icon: 'raftMain', label: '筏板主筋(R)' },
    { icon: 'raftNeg', label: '筏板负筋(X)' },
    { icon: 'isolated', label: '独立基础(P)' },
    { icon: 'strip', label: '条形基础(T)' },
    { icon: 'pileCap', label: '桩承台(V)' },
    { icon: 'footing', label: '承台梁(F)' },
    { icon: 'pile', label: '桩(U)' },
    { icon: 'slabStrip', label: '基础板带(W)', last: true },
    { folder: true, label: '其它' },
    { folder: true, open: true, label: '自定义' },
    { icon: 'customPoint', label: '自定义点' },
    { icon: 'customLine', label: '自定义线(X)', selected: true },
    { icon: 'customFace', label: '自定义面' },
    { icon: 'dimTree', label: '尺寸标注(W)', last: true },
    { folder: true, label: '识别', badge: 'NEW' },
];

const Columns = () => (
    <svg className="h-[14px] w-[13px] shrink-0" viewBox="0 0 13 14" fill="none">
        <path d="M.5.5h12v13H.5z" fill="#d9f0ff" stroke="#1d8fe0" />
        <path d="M2.500 2.500h3v9h-3zM7.500 2.500h3v9h-3zM3 5.500h2M8 5.500h2" stroke="#1d8fe0" />
    </svg>
);

const TreeRow = ({ item }) => {
    if (item.folder) {
        return (
            <li className="flex h-4 items-center pl-[6px] whitespace-nowrap">
                <svg className="size-3 shrink-0" viewBox="0 0 12 12" fill="none">
                    <path
                        d={item.open ? 'M2 4l4 4 4-4' : 'M4 2l4 4-4 4'}
                        stroke={item.open ? '#333' : '#9a9a9a'}
                        strokeWidth="1.500"
                    />
                </svg>
                <i className="mr-px ml-px w-[3px] border-t border-dotted border-[#777]" />
                <Icon name={item.open ? 'folderOpen' : 'folder'} />
                <span className="pl-1">
                    <Song text={item.label} />
                </span>
                {item.badge && (
                    <span className="flex items-center gap-[2px] pl-1">
                        <Columns />
                        <b className="bg-[#ffe600] text-[10px] leading-3">{item.badge}</b>
                    </span>
                )}
            </li>
        );
    }
    return (
        <li className="flex h-4 items-center pl-3 whitespace-nowrap">
            <i className="h-full w-5 shrink-0 border-l border-dotted border-[#777]" />
            <span className="flex h-full w-[10px] shrink-0 flex-col">
                <i className="h-2 border-b border-l border-dotted border-[#777]" />
                <i className={`h-2 border-[#777] ${item.last ? '' : 'border-l border-dotted'}`} />
            </span>
            <span className={`flex h-4 items-center ${item.selected ? 'bg-[#d9d9d9]' : ''}`}>
                <Icon name={item.icon} />
                <span className="pl-[5px]">
                    <Song text={item.label} />
                </span>
            </span>
            {item.selected && <Columns />}
        </li>
    );
};

const NavButton = ({ children }) => (
    <button className="h-[22px] shrink-0 border border-[#a0a0a0] border-t-white border-l-[#d0d0d0] bg-[#f0f0f0] text-center">
        {children}
    </button>
);

const ScrollArrow = ({ down }) => (
    <svg className="h-[6px] w-[9px]" viewBox="0 0 9 6" fill="none">
        <path d={down ? 'M.5.5l4 4 4-4' : 'M.5 5.500l4-4 4 4'} stroke="#505050" strokeWidth="2" />
    </svg>
);

const Sidebar = () => (
    <aside className="flex w-[165px] shrink-0 flex-col">
        <div className="mb-[2px] flex h-4 shrink-0 items-center bg-[#0054e3] text-white">
            <h2 className="flex-1">模块导航栏</h2>
            <button aria-label="固定" className="w-[18px]">
                <svg className="size-[10px]" viewBox="0 0 10 10" fill="none">
                    <path d="M3 .5h4v5H3zM1 5.500h8M5 6v4M6.500 1v4" stroke="#fff" />
                </svg>
            </button>
            <button aria-label="关闭面板" className="w-[13px]">
                <svg className="size-2" viewBox="0 0 8 8">
                    <path d="M.5.5l7 7M7.500.5l-7 7" stroke="#fff" />
                </svg>
            </button>
        </div>
        <NavButton>工程设置</NavButton>
        <NavButton>绘图输入</NavButton>
        <div className="flex h-[27px] shrink-0 items-center gap-[7px] border-t border-l-2 border-[#a0a0a0] bg-gradient-to-b from-white to-[#ececec] pl-1">
            <button aria-label="全部展开">
                <svg className="h-4 w-[17px]" viewBox="0 0 17 16" fill="none">
                    <path d="M5 1v8M1 5h8M12 7v8M8 11h8" stroke="#0c3b3b" strokeWidth="3" />
                    <path d="M5 2v6M2 5h6M12 8v6M9 11h6" stroke="#1b9a92" strokeWidth="1.200" />
                </svg>
            </button>
            <button aria-label="全部折叠">
                <svg className="h-4 w-[17px]" viewBox="0 0 17 16" fill="none">
                    <path d="M0 5h9M7 11h9" stroke="#0c3b3b" strokeWidth="3" />
                    <path d="M1 5h7M8 11h7" stroke="#1b9a92" strokeWidth="1.200" />
                </svg>
            </button>
        </div>
        <div className="flex min-h-0 flex-1 border-2 border-t border-[#8a8f98] bg-white">
            <ul className="min-w-0 flex-1 overflow-hidden pl-px">
                {tree.map((item, i) => (
                    <TreeRow key={i} item={item} />
                ))}
            </ul>
            <div className="mr-px flex w-4 shrink-0 flex-col items-center bg-[#f0f0f0]">
                <span className="flex h-[17px] items-center"><ScrollArrow /></span>
                <span className="flex-[160]" />
                <span className="w-full flex-[281] bg-[#cdcdcd]" />
                <span className="flex h-[24px] items-center"><ScrollArrow down /></span>
            </div>
        </div>
        <div className="flex shrink-0 flex-col pt-px">
            <NavButton>单构件输入</NavButton>
            <NavButton>报表预览</NavButton>
        </div>
    </aside>
);

const gridLines = [
    [172, 168, 562, 675], [178, 168, 567, 672], [254, 168, 616, 637], [337, 168, 671, 602],
    [418, 168, 725, 567], [501, 168, 780, 532], [582, 168, 756, 393], [664, 168, 811, 358],
    [953, 168, 1004, 233], [959, 168, 1007, 230], [170, 351, 451, 168], [170, 555, 764, 168],
    [508, 675, 780, 498], [524, 675, 785, 505], [540, 675, 791, 512], [558, 675, 797, 520],
    [577, 675, 803, 528], [1338, 179, 1354, 168],
];

const axisMarks = [
    { x: 428, y: 181, name: '5' },
    { x: 969, y: 181, name: '6' },
    { x: 183, y: 343, name: 'A' },
    { x: 580, y: 662, name: 'A1' },
];

const Viewport = () => (
    <div className="min-h-0 flex-1 overflow-hidden bg-black">
        <svg className="block h-full w-full" viewBox="170 168 1195 507" preserveAspectRatio="xMinYMin slice">
            {axisMarks.map((m) => (
                <g key={m.name}>
                    <circle cx={m.x} cy={m.y} r="12.500" fill="none" stroke="#008a00" shapeRendering="crispEdges" />
                    <text x={m.x} y={m.y + 5} textAnchor="middle" fill="#dcdcdc" className="font-['Roboto',sans-serif] text-[14px]">
                        {m.name}
                    </text>
                </g>
            ))}
            <g stroke="#ff0000" shapeRendering="crispEdges">
                {gridLines.map(([x1, y1, x2, y2], i) => (
                    <line key={i} x1={x1} y1={y1} x2={x2} y2={y2} />
                ))}
            </g>
            <g shapeRendering="crispEdges">
                <path d="M512 168h22l7 8-11 15z" fill="#999" />
                <path d="M534 168h11l2 4-6 4z" fill="#e6e6e6" />
                <path d="M541 176l6-4-14 18-3 1z" fill="#b4b4b4" />
                <path d="M265 675l49-33 7 7 25-16 30 40v2z" fill="#e6e6e6" />
                <path d="M725 414l376-246h53L741 437z" fill="#00e800" />
                <path d="M725 414l16 23-15 22-17-22z" fill="#009a00" />
                <path d="M738 441l4 8-16 10z" fill="#00b400" />
                <path d="M741 437l413-269h188L829 499l-25 20z" fill="#0074e8" />
                <path d="M1341 168h4l-5 9-12 17-521 338 22-33z" fill="#005ab4" />
                <path d="M741 437l62 81 16-22-5-8 3-4 12 15-22 33-69-89z" fill="#00509c" />
            </g>
            <g fill="none">
                <path d="M225 624l-24-30" stroke="#00ff00" strokeWidth="4" />
                <path d="M195 586l10 7-7 5z" fill="#00ff00" />
                <path d="M206 582l4 4 5-4M210 586v5" stroke="#00ff00" />
                <path d="M225 625l29-19" stroke="#ff0000" strokeWidth="4" />
                <path d="M263 600l-7 9-5-6z" fill="#ff0000" />
                <path d="M242 588l9 8M251 588l-9 8" stroke="#ff0000" />
                <path d="M226 624l8-12" stroke="#0080ff" strokeWidth="4" />
                <path d="M231 607l8-2v7l-6 3-4-3z" fill="#0080ff" />
                <path d="M227 605h8l-8 9" stroke="#0080ff" />
            </g>
        </svg>
    </div>
);

const NumberBox = ({ label, value, className }) => (
    <span className={`flex h-[23px] shrink-0 items-center border border-[#7a7a7a] bg-[#f4f4f4] ${className}`}>
        <input
            aria-label={label}
            defaultValue={value}
            disabled
            className="w-full min-w-0 flex-1 bg-transparent pr-[9px] text-right text-[#808080]"
        />
        <svg className="mr-1 h-4 w-[6px] shrink-0" viewBox="0 0 6 16">
            <path d="M0 4h6L3 1zM0 12h6l-3 3z" fill="#5a5a5a" />
        </svg>
    </span>
);

const SnapBar = () => (
    <div className="flex h-[31px] shrink-0 gap-[2px] pt-px">
        <Group className="pr-[2px]">
            <Grip />
            <Tool icon="ortho" label="正交" />
            <Tool icon="snap" label="对象捕捉" active />
            <Tool icon="dynInput" label="动态输入" />
        </Group>
        <Group className="pr-[2px]">
            <Grip />
            <Tool icon="cross" label="交点" />
            <Tool icon="perp" label="垂点" active />
            <Tool icon="mid" label="中点" active />
            <Tool icon="vertex" label="顶点" />
            <Tool icon="coord" label="坐标" />
        </Group>
        <Group className="pr-[3px] text-[#808080]">
            <Grip />
            <Combo label="偏移方式" value="不偏移" className="w-[58px] text-black" />
            <Sep />
            <span className="w-5">X=</span>
            <NumberBox label="X 偏移" value="0" className="w-[58px]" />
            <span className="w-7">mm</span>
            <span className="w-[18px]">Y=</span>
            <NumberBox label="Y 偏移" value="0" className="w-[58px]" />
            <span className="w-6">mm</span>
            <Sep />
            <label className="flex items-center gap-2 text-black">
                <input type="checkbox" className="size-[11px] appearance-none border border-[#9a9a9a]" />
                旋转
            </label>
            <i className="w-[6px]" />
            <NumberBox label="旋转角度" value="0.000" className="w-[68px]" />
            <span className="pl-[2px]">°</span>
        </Group>
    </div>
);

const StatusCell = ({ text, className }) => (
    <span className={`flex h-[20px] items-center border border-[#d0d0d0] bg-gradient-to-b from-white to-[#f1f1f1] pl-px whitespace-nowrap ${className}`}>
        <span>
            <Song text={text} />
        </span>
    </span>
);

const StatusBar = () => (
    <footer className="flex h-[22px] shrink-0 gap-[3px] border-t border-white bg-[#f8f8f8] pt-px">
        <StatusCell text="X=269683 Y=1492" className="w-[147px]" />
        <StatusCell text="层高:4.5m" className="w-[77px]" />
        <StatusCell text="底标高:4.45m" className="w-[97px]" />
        <StatusCell text="1(1)" className="w-[47px]" />
        <StatusCell text="按鼠标左键指定第一个角点，或拾取构件图元" className="flex-1" />
        <StatusCell text="267.4 FPS" className="w-[70px]" />
    </footer>
);

const TaskButton = ({ label, running, className = 'w-[49px]', children }) => (
    <button
        aria-label={label}
        className={`relative flex h-full shrink-0 items-center justify-center ${className}`}
    >
        <svg className="size-6" viewBox="0 0 24 24" fill="none">
            {children}
        </svg>
        {running && <i className="absolute inset-x-1 bottom-0 h-[3px] bg-[#76b9ed]" />}
    </button>
);

const TrayIcon = ({ label, className, children }) => (
    <button aria-label={label} className={`flex shrink-0 justify-center ${className}`}>
        <svg className="h-[18px] w-6" viewBox="0 0 24 18" fill="none" stroke="#fff">
            {children}
        </svg>
    </button>
);

const Taskbar = () => (
    <nav className="flex h-10 shrink-0 items-center bg-[#06171d] text-white">
        <button aria-label="开始" className="flex h-full w-12 shrink-0 items-center justify-center bg-[#010608]">
            <svg className="size-4" viewBox="0 0 16 16" fill="#fff">
                <path d="M0 2.300l6.500-.9v6.200H0zM7.300 1.300L16 0v7.600H7.300zM0 8.400h6.500v6.200L0 13.700zM7.300 8.400H16V16l-8.700-1.300z" />
            </svg>
        </button>
        <div className="flex h-full w-[344px] shrink-0 items-center bg-[#f2f2f2] pl-[9px] text-[#2b2b2b]">
            <i className="size-[21px] shrink-0 rounded-full border-[3px] border-black" />
            <input
                aria-label="搜索"
                placeholder="在这里输入你要搜索的内容"
                className="ml-[10px] min-w-0 flex-1 bg-transparent text-sm outline-none placeholder:text-[#2b2b2b]"
            />
            <svg className="mr-[14px] h-4 w-[13px] shrink-0" viewBox="0 0 13 16" fill="none" stroke="#333">
                <rect x="4" y=".5" width="5" height="10" rx="2" />
                <path d="M1.500 8v3c0 1 1 2 2 2h6c1 0 2-1 2-2V8M6.500 13v2.500M4.500 15.500h4" />
            </svg>
        </div>
        <TaskButton label="任务视图">
            <path d="M4.500 4v3h9V4M4.500 20v-3h9v3M4.500 9.500h9v5h-9zM18.500 4v4M18.500 13v7" stroke="#fff" strokeWidth="1.200" />
            <path d="M17 9h3v3h-3z" fill="#fff" />
        </TaskButton>
        <TaskButton label="浏览器" className="w-[51px]">
            <g fill="#e9e9e9">
                <path d="M11.500 11.500C5 12 1 9 2 5c1-3 6-4 9-2 1 3-1 5-3 5 2 .5 3.500 1.500 3.500 3.500z" />
                <path d="M12.500 11.500C12 5 15 1 19 2c3 1 4 6 2 9-3 1-5-1-5-3-.5 2-1.500 3.500-3.500 3.500z" />
                <path d="M12.500 12.500C19 12 23 15 22 19c-1 3-6 4-9 2-1-3 1-5 3-5-2-.5-3.500-1.500-3.500-3.500z" />
                <path d="M11.500 12.500C12 19 9 23 5 22c-3-1-4-6-2-9 3-1 5 1 5 3 .5-2 1.500-3.500 3.500-3.500z" />
            </g>
        </TaskButton>
        <TaskButton label="Internet Explorer" className="w-[51px]">
            <path d="M20 15.500a8 8 0 11.5-4H6" stroke="#eee" strokeWidth="3.200" />
            <path d="M3 21c-3-3 5-15 13-18 4-2 6-1 5 3" stroke="#eee" strokeWidth="1.600" />
        </TaskButton>
        <TaskButton label="通知中心" className="w-[54px]">
            <path d="M13 9a5 5 0 10-1 7c3-3 1-6-2-6s-4 4-1 5M17 12a8.500 8.500 0 11-6-8" stroke="#ddd" strokeWidth="1.400" />
            <path d="M19 0c3 0 3.500 3 4 6l1 3H14l1-3c0-3 1-6 4-6z" fill="#f0b000" />
            <path d="M17.500 10h3l-1.500 2z" fill="#c88a00" />
        </TaskButton>
        <TaskButton label="PDF" running className="w-12">
            <rect x="0" y="0" width="24" height="24" rx="3" fill="#d8690f" stroke="#f0b080" />
            <text x="12" y="17" textAnchor="middle" fill="#f6e3d0" className="font-['Roboto',sans-serif] text-[11px] font-bold">
                PDF
            </text>
        </TaskButton>
        <TaskButton label="笔记" running>
            <rect x="0" y="0" width="24" height="24" rx="2" fill="#f5a01e" stroke="#ffd27a" />
            <path d="M3 6l13-2 2 14-12 3z" fill="#fffbe8" />
            <path d="M6 9l7-1M6 12l7-1M7 15l5-1" stroke="#6b6b6b" />
            <path d="M12 15l2-5 7-8 2 2-7 9z" fill="#9a3c14" />
        </TaskButton>
        <div className="flex-1" />
        <div className="flex h-full w-[17px] shrink-0 flex-col items-center justify-between bg-[#f0f0f0] py-[6px]">
            <ScrollArrow />
            <ScrollArrow down />
        </div>
        <a href="#links" className="w-[59px] shrink-0 pl-[10px]">链接</a>
        <svg className="size-[15px] shrink-0" viewBox="0 0 15 15" fill="none" stroke="#fff" strokeWidth="1.200">
            <circle cx="4.500" cy="7" r="2.500" />
            <path d="M.7 14.500c0-6 7.500-6 7.500 0" />
            <circle cx="10.500" cy="3" r="2.500" />
            <path d="M8 7.500c3-3 6.500-1 6.500 3" />
        </svg>
        <div className="w-[92px] shrink-0 pl-[18px] text-center leading-[17px]">
            <p>40%</p>
            <p>CPU使用</p>
        </div>
        <TrayIcon label="显示隐藏的图标" className="w-6">
            <path d="M6.500 12l5.500-6 5.500 6" strokeWidth="1.300" />
        </TrayIcon>
        <TrayIcon label="电源" className="w-[25px]">
            <path d="M9 6.500h10.500v7H6.500v-3M20.500 8.500v3" />
            <path d="M9 8h9v4H9z" fill="#fff" stroke="none" />
            <path d="M5 2v2.500M8 2v2.500M4 5h5v2c0 1-1 2-2.500 2S4 8 4 7zM6.500 9v3" />
        </TrayIcon>
        <TrayIcon label="网络" className="w-6">
            <path d="M7 15a9 9 0 019-9M10 15a6 6 0 016-6M13 15a3 3 0 013-3M5 12A12 12 0 0116 3" />
            <circle cx="15.500" cy="14.500" r="1" fill="#fff" />
        </TrayIcon>
        <TrayIcon label="音量" className="w-[22px]">
            <path d="M5 7h2.500l4-4v12l-4-4H5zM14 7l4 4M18 7l-4 4" />
        </TrayIcon>
        <TrayIcon label="触摸键盘" className="w-[34px]">
            <path d="M1 3.500h22v11H1z" />
            <path d="M4 6.500h16M4 9h16" strokeDasharray="1.500 1.500" />
            <path d="M5 12h13" />
        </TrayIcon>
        <span className="w-[22px] text-center text-[19px]">A</span>
        <TrayIcon label="输入法" className="w-9">
            <path d="M5 3l14-1v13l-13 2z" fill="#f0471c" stroke="none" />
            <path d="M16 6c-3-2-7-1-7 1s6 2 6 4-4 2.500-7 1" strokeWidth="2" />
        </TrayIcon>
        <div className="w-[72px] shrink-0 text-center leading-[19px]">
            <p>17:51</p>
            <p>2018/9/30</p>
        </div>
        <button aria-label="操作中心" className="flex w-[49px] shrink-0 justify-center">
            <svg className="h-7 w-6" viewBox="0 0 24 28">
                <path d="M0 3h16v12H8l-4 4v-4H0z" fill="#fff" />
                <path d="M3 6.500h10M3 9.500h10M3 12.500h6" stroke="#06171d" />
                <circle cx="15" cy="18" r="8" fill="#3a3f42" stroke="#8a8f92" />
                <text x="15" y="22" textAnchor="middle" fill="#fff" className="font-['Noto_Sans',sans-serif] text-[12px]">
                    1
                </text>
            </svg>
        </button>
        <i className="mr-1 h-full w-px bg-[#5b666a]" />
    </nav>
);

const App = () => (
    <div className="flex h-screen flex-col overflow-hidden bg-[#f0f0f0] font-['Noto_Sans','Noto_Sans_CJK_SC',sans-serif] text-[12px] leading-4 text-black">
        <TitleBar />
        <AccountBar />
        <MainToolbar />
        <div className="flex min-h-0 flex-1 gap-[5px]">
            <Sidebar />
            <main className="flex min-w-0 flex-1 flex-col pr-px">
                <EditToolbars />
                <Viewport />
                <SnapBar />
            </main>
        </div>
        <StatusBar />
        <Taskbar />
    </div>
);

export default App;
